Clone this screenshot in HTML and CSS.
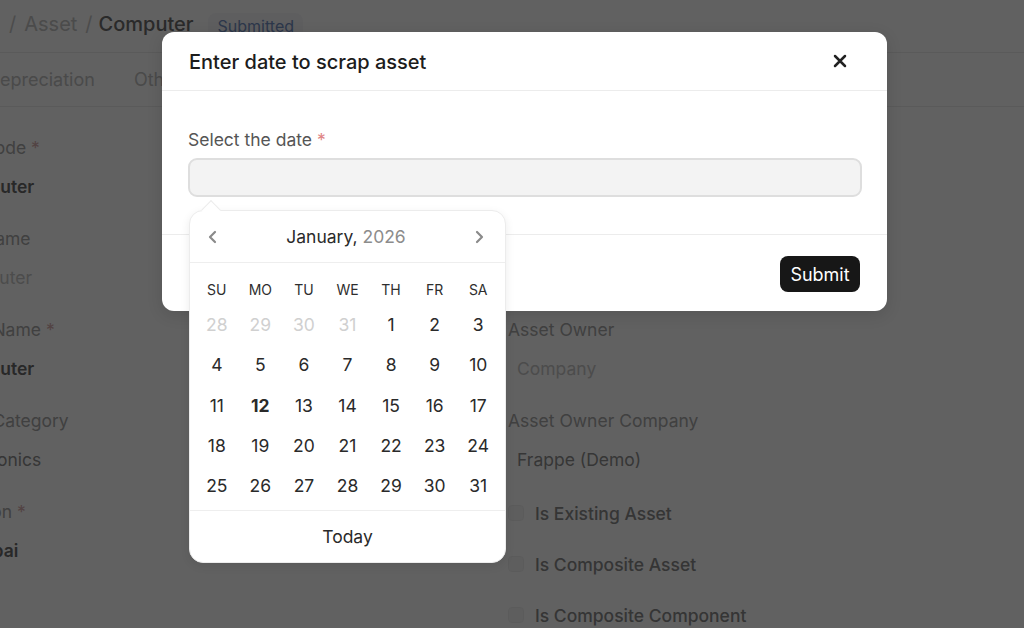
FILE: index.html
```html
<!DOCTYPE html>
<html lang="en">
<head>
<meta charset="utf-8">
<title>Asset - Computer</title>
<link rel="stylesheet" href="styles.css">
</head>
<body>
<div class="page">
  <div class="crumbs">
    <span class="crumb-sep">/</span>
    <span class="crumb">Asset</span>
    <span class="crumb-sep">/</span>
    <span class="crumb-current">Computer</span>
    <span class="badge">Submitted</span>
  </div>
  <div class="tabs">
    <span class="tab tab-first">Depreciation</span>
    <span class="tab">Other Info</span>
  </div>
  <div class="form">
    <div class="col col-left">
      <div class="field"><div class="label">Item Code <span class="req">*</span></div><div class="value bold">Computer</div></div>
      <div class="field"><div class="label">Item Name</div><div class="value muted">Computer</div></div>
      <div class="field"><div class="label">Asset Name <span class="req">*</span></div><div class="value bold">Computer</div></div>
      <div class="field"><div class="label">Asset Category</div><div class="value">Electronics</div></div>
      <div class="field"><div class="label">Location <span class="req">*</span></div><div class="value bold">Mumbai</div></div>
    </div>
    <div class="col">
      <div class="field"><div class="label">Company <span class="req">*</span></div><div class="value">Frappe (Demo)</div></div>
      <div class="field"><div class="label">Purchase Date</div><div class="value">01-01-2025</div></div>
      <div class="field"><div class="label">Asset Owner</div><div class="value muted">Company</div></div>
      <div class="field"><div class="label">Asset Owner Company</div><div class="value">Frappe (Demo)</div></div>
      <div class="check"><span class="box"></span>Is Existing Asset</div>
      <div class="check"><span class="box"></span>Is Composite Asset</div>
      <div class="check"><span class="box"></span>Is Composite Component</div>
    </div>
  </div>
</div>

<div class="overlay">
  <div class="modal">
    <div class="modal-header">
      <h4 class="modal-title">Enter date to scrap asset</h4>
      <button class="close" aria-label="Close">
        <svg width="14" height="14" viewBox="0 0 14 14"><path d="M2 2 L12 12 M12 2 L2 12" stroke="#222222" stroke-width="2.5" stroke-linecap="round"/></svg>
      </button>
    </div>
    <div class="modal-body">
      <label class="dlabel">Select the date <span class="dreq">*</span></label>
      <div class="input-wrap">
        <div class="input"></div>
        <div class="picker">
          <span class="picker-arrow"></span>
          <div class="picker-head">
            <svg class="chev" width="12" height="14" viewBox="0 0 12 14"><path d="M8 2 L3 7 L8 12" fill="none" stroke="#8a8a8a" stroke-width="2.2" stroke-linecap="round" stroke-linejoin="round"/></svg>
            <div class="month">January, <span class="year">2026</span></div>
            <svg class="chev" width="12" height="14" viewBox="0 0 12 14"><path d="M4 2 L9 7 L4 12" fill="none" stroke="#8a8a8a" stroke-width="2.2" stroke-linecap="round" stroke-linejoin="round"/></svg>
          </div>
          <div class="picker-body">
            <div class="dows">
              <span>SU</span><span>MO</span><span>TU</span><span>WE</span><span>TH</span><span>FR</span><span>SA</span>
            </div>
            <div class="days">
              <span class="other">28</span><span class="other">29</span><span class="other">30</span><span class="other">31</span><span>1</span><span>2</span><span>3</span>
              <span>4</span><span>5</span><span>6</span><span>7</span><span>8</span><span>9</span><span>10</span>
              <span>11</span><span class="today">12</span><span>13</span><span>14</span><span>15</span><span>16</span><span>17</span>
              <span>18</span><span>19</span><span>20</span><span>21</span><span>22</span><span>23</span><span>24</span>
              <span>25</span><span>26</span><span>27</span><span>28</span><span>29</span><span>30</span><span>31</span>
            </div>
          </div>
          <div class="picker-foot">Today</div>
        </div>
      </div>
    </div>
    <div class="modal-footer">
      <button class="submit">Submit</button>
    </div>
  </div>
</div>
</body>
</html>
```

FILE: styles.css
```css
* { box-sizing: border-box; }
html, body { margin: 0; padding: 0; }
body {
  width: 1024px;
  height: 628px;
  overflow: hidden;
  background: #ffffff;
  font-family: Inter, "Noto Sans", "Liberation Sans", sans-serif;
  color: #6e6e6e;
  position: relative;
}

/* ---------- background page ---------- */
.page { width: 1024px; }
.crumbs {
  height: 53px;
  display: flex;
  align-items: center;
  gap: 8px;
  padding-left: 9px;
  padding-bottom: 4px;
  font-size: 20px;
  border-bottom: 1px solid #ececec;
}
.crumb-sep { color: #c8c8c8; }
.crumb { color: #c4c4c4; }
.crumb-current { color: #6e6e6e; font-weight: 500; margin-right: 6px; margin-left: -2px; }
.badge {
  font-size: 16px;
  color: #7591c4;
  background: #f7f7fa;
  border-radius: 8px;
  padding: 3px 9px 3px 10px;
  margin-top: 4px;
}
.tabs {
  height: 54px;
  display: flex;
  align-items: center;
  gap: 39px;
  font-size: 18px;
  color: #c2c2c2;
  border-bottom: 1px solid #ececec;
  margin-left: -13px;
}
.form {
  display: grid;
  grid-template-columns: 460px 480px;
  column-gap: 107px;
  margin-left: -59px;
  padding-top: 30px;
}
.field { margin-bottom: 21px; }
.label {
  height: 22px;
  line-height: 22px;
  font-size: 17.5px;
  color: #a8a8a8;
  margin-bottom: 8px;
}
.req { color: #d8b0b0; }
.value {
  height: 40px;
  line-height: 40px;
  font-size: 17.5px;
  padding-left: 9px;
  color: #8f8f8f;
}
.value.bold { font-weight: 600; color: #6a6a6a; }
.value.muted { color: #c8c8c8; }
.check {
  height: 24px;
  display: flex;
  align-items: center;
  gap: 11px;
  font-size: 17.5px;
  font-weight: 500;
  color: #8c8c8c;
  margin-bottom: 27px;
}
.box {
  width: 16px;
  height: 16px;
  border-radius: 4px;
  border: 1px solid #f0f0f0;
  background: #f7f7f7;
}

/* ---------- overlay + modal ---------- */
.overlay {
  position: absolute;
  inset: 0;
  background: rgba(0, 0, 0, 0.62);
  padding: 32px 0 0 162px;
}
.modal {
  width: 725px;
  background: #ffffff;
  border-radius: 12px;
  box-shadow: 0 4px 16px rgba(0,0,0,0.12);
  color: #1f1f1f;
}
.modal-header {
  height: 59px;
  display: flex;
  align-items: center;
  justify-content: space-between;
  padding: 0 40px 0 27px;
  border-bottom: 1px solid #ececec;
}
.modal-title {
  margin: 0;
  font-size: 20px;
  font-weight: 500;
  color: #1c1c1c;
  padding-top: 2px;
}
.close {
  border: 0;
  background: none;
  padding: 0;
  width: 14px;
  height: 14px;
  display: flex;
}
.modal-body {
  height: 144px;
  padding: 38px 25px 0 26px;
  border-bottom: 1px solid #ececec;
}
.dlabel {
  display: block;
  height: 22px;
  line-height: 22px;
  font-size: 17.5px;
  color: #555555;
  margin-bottom: 7px;
}
.dreq { color: #e08585; }
.input-wrap { position: relative; }
.input {
  height: 39px;
  border-radius: 9px;
  background: #f3f3f3;
  border: 2px solid #dedede;
}
.modal-footer {
  height: 76px;
  display: flex;
  align-items: center;
  justify-content: flex-end;
  padding: 0 27px 0 0;
}
.submit {
  width: 80px;
  height: 36px;
  border: 0;
  border-radius: 8px;
  background: #171717;
  color: #ffffff;
  font-family: inherit;
  font-size: 18px;
  font-weight: 400;
  margin-top: 2px;
}

/* ---------- date picker ---------- */
.picker {
  position: absolute;
  left: 1px;
  top: 52px;
  width: 317px;
  background: #ffffff;
  border-radius: 14px;
  border: 1px solid #ececec;
  box-shadow: 0 3px 10px rgba(0,0,0,0.08);
  z-index: 2;
}
.picker-arrow {
  position: absolute;
  left: 14px;
  top: -8px;
  width: 14px;
  height: 14px;
  background: #ffffff;
  border-left: 1px solid #ececec;
  border-top: 1px solid #ececec;
  transform: rotate(45deg);
}
.picker-head {
  height: 52px;
  display: flex;
  align-items: center;
  justify-content: space-between;
  padding: 0 20px 0 17px;
  border-bottom: 1px solid #eeeeee;
  font-size: 17.5px;
  position: relative;
}
.month { color: #2a2a2a; }
.year { color: #8c8c8c; }
.picker-body { padding: 11px 5px 4px 5px; border-bottom: 1px solid #eeeeee; }
.dows, .days {
  display: grid;
  grid-template-columns: repeat(7, 1fr);
  text-align: center;
}
.dows span {
  height: 31px;
  line-height: 31px;
  font-size: 14px;
  color: #2e2e2e;
}
.days span {
  height: 40.3px;
  line-height: 40px;
  font-size: 17.5px;
  color: #2a2a2a;
}
.days .other { color: #d0d0d0; }
.days .today { font-weight: 700; }
.picker-foot {
  height: 51px;
  line-height: 51px;
  text-align: center;
  font-size: 17.5px;
  color: #2a2a2a;
}
```
